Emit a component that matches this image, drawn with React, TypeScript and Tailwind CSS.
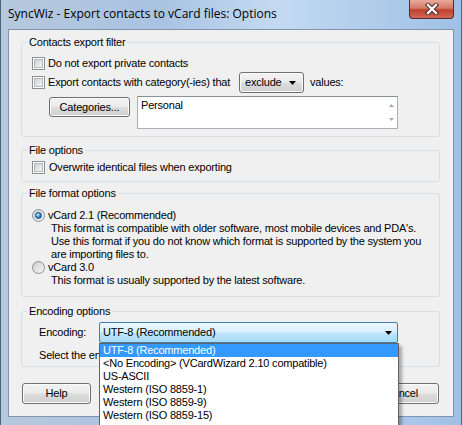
import React from "react";

const ui = "font-['Liberation_Sans',Arial,sans-serif] text-[11px] leading-[13px] tracking-[-0.2px] text-black";
const btnFace =
  "rounded-[3px] border border-[#707070] bg-[linear-gradient(#f2f2f2_0%,#ebebeb_48%,#dddddd_52%,#cfcfcf_100%)] shadow-[inset_0_0_0_1px_#fbfbfb]";

function CheckBox() {
  return (
    <span className="block h-[13px] w-[13px] shrink-0 border border-[#8e8f8f] bg-white p-px">
      <span className="block h-full w-full border border-[#b4b8bd] bg-[linear-gradient(135deg,#cfd2d6,#f4f4f4)]" />
    </span>
  );
}

function Radio({ checked }: { checked?: boolean }) {
  return (
    <span className="flex h-[13px] w-[13px] shrink-0 items-center justify-center rounded-full border border-[#8e8f8f] bg-[linear-gradient(135deg,#c9ccd0,#f7f7f7)]">
      {checked && (
        <span className="block h-[7px] w-[7px] rounded-full border border-[#1b4f7c] bg-[radial-gradient(circle_at_35%_35%,#c6ecff,#3b9ae0_45%,#0d4c86)]" />
      )}
    </span>
  );
}

function Btn({ children, className }: { children: React.ReactNode; className?: string }) {
  return <div className={"flex items-center justify-center " + btnFace + " " + (className ?? "")}>{children}</div>;
}

function Arrow() {
  return (
    <svg width="7" height="4" viewBox="0 0 7 4" className="shrink-0">
      <path d="M0 0h7L3.5 4z" fill="#000" />
    </svg>
  );
}

function Group({
  title,
  className,
  children,
}: {
  title: string;
  className?: string;
  children: React.ReactNode;
}) {
  return (
    <fieldset className={"ml-[12px] w-[419px] rounded-[3px] border border-[#d5dfe5] " + (className ?? "")}>
      <legend className="ml-[5px] px-[2px]">{title}</legend>
      {children}
    </fieldset>
  );
}

export default function App() {
  const encodings = [
    "UTF-8 (Recommended)",
    "<No Encoding> (VCardWizard 2.10 compatible)",
    "US-ASCII",
    "Western (ISO 8859-1)",
    "Western (ISO 8859-9)",
    "Western (ISO 8859-15)",
  ];

  return (
    <div className={"relative h-[425px] w-[462px] overflow-hidden border-r border-l border-[#4a6483] bg-[linear-gradient(90deg,#b6c8dc_0%,#a9c3e2_35%,#c3daf1_60%,#9fc0e6_100%)] " + ui}>
      {/* title bar */}
      <div className="flex h-[29px] items-start">
        <div className="pt-[6px] pl-[7px] font-['Open_Sans','Liberation_Sans',sans-serif] text-[12px] leading-[16px] tracking-normal text-black">
          SyncWiz - Export contacts to vCard files: Options
        </div>
        <div className="ml-auto mr-[7px] flex h-[19px] w-[45px] items-center justify-center rounded-b-[4px] border border-t-0 border-[#5c2a24] bg-[linear-gradient(#e9a99a_0%,#d47a69_45%,#c0402c_55%,#d0685a_100%)]">
          <svg width="14" height="12" viewBox="0 0 14 12">
            <path d="M3 2l8 8M11 2l-8 8" stroke="#4a2520" strokeWidth="4.4" strokeLinecap="square" />
            <path d="M3 2l8 8M11 2l-8 8" stroke="#fff" strokeWidth="2.4" strokeLinecap="square" />
          </svg>
        </div>
      </div>

      {/* client area */}
      <div className="ml-[7px] h-[388px] w-[446px] border border-[#7f94ad] bg-[#f0f0f0]">
        <Group title="Contacts export filter" className="mt-[6px] h-[101px]">
          <div className="mt-[8px] flex items-center gap-[3px] pl-[10px]">
            <CheckBox />
            <span>Do not export private contacts</span>
          </div>
          <div className="mt-[2px] flex h-[21px] items-center pl-[10px]">
            <CheckBox />
            <span className="ml-[3px] w-[191px] whitespace-nowrap">Export contacts with category(-ies) that</span>
            <div className={"flex h-[21px] w-[65px] items-center pr-[7px] pl-[5px] " + btnFace}>
              <span className="flex-1">exclude</span>
              <Arrow />
            </div>
            <span className="ml-[6px]">values:</span>
          </div>
          <div className="mt-[3px] flex items-start pl-[27px]">
            <Btn className="mt-px h-[20px] w-[81px]">Categories...</Btn>
            <div className="ml-[7px] flex h-[33px] w-[261px] border border-[#abadb3] border-t-[#8b8f98] bg-white">
              <span className="flex-1 pt-[2px] pl-[3px]">Personal</span>
              <div className="flex w-[12px] flex-col items-center justify-between py-[7px]">
                <svg width="5" height="3" viewBox="0 0 5 3"><path d="M0 3h5L2.5 0z" fill="#a8a8a8" /></svg>
                <svg width="5" height="3" viewBox="0 0 5 3"><path d="M0 0h5L2.5 3z" fill="#a8a8a8" /></svg>
              </div>
            </div>
          </div>
        </Group>

        <Group title="File options" className="mt-[7px] h-[38px]">
          <div className="mt-[4px] flex items-center gap-[4px] pl-[10px]">
            <CheckBox />
            <span>Overwrite identical files when exporting</span>
          </div>
        </Group>

        <Group title="File format options" className="mt-[5px] h-[110px]">
          <div className="mt-[9px] pl-[10px]">
            <div className="flex items-center gap-[3px]">
              <Radio checked />
              <span>vCard 2.1 (Recommended)</span>
            </div>
            <div className="pl-[19px]">
              <div>This format is compatible with older software, most mobile devices and PDA's.</div>
              <div>Use this format if you do not know which format is supported by the system you</div>
              <div>are importing files to.</div>
            </div>
            <div className="flex items-center gap-[3px]">
              <Radio />
              <span>vCard 3.0</span>
            </div>
            <div className="pl-[19px]">This format is usually supported by the latest software.</div>
          </div>
        </Group>

        <Group title="Encoding options" className="mt-[8px] h-[62px]">
          <div className="mt-[4px] flex h-[21px] items-center pl-[17px]">
            <span className="w-[60px]">Encoding:</span>
            <div className="flex h-[21px] w-[299px] items-center justify-between rounded-[2px] border border-[#3c7fb1] bg-[linear-gradient(#eaf6fd_0%,#d9f0fc_48%,#bee6fd_52%,#a7d9f5_100%)] pr-[5px] pl-[3px]">
              <span>UTF-8 (Recommended)</span>
              <Arrow />
            </div>
          </div>
          <div className="mt-[6px] pl-[17px]">Select the en</div>
        </Group>

        <div className="mt-[16px] flex items-center pr-[14px] pl-[13px]">
          <Btn className="h-[21px] w-[69px]">Help</Btn>
          <Btn className="ml-auto h-[21px] w-[75px]">OK</Btn>
          <Btn className="ml-[4px] h-[21px] w-[75px]">Cancel</Btn>
        </div>
      </div>

      {/* open dropdown list */}
      <div className="absolute top-[343px] left-[98px] w-[300px] border border-[#646464] bg-white shadow-[3px_3px_3px_rgba(0,0,0,0.3)]">
        {encodings.map((e, i) => (
          <div
            key={e}
            className={"h-[13px] pl-[3px] whitespace-nowrap " + (i === 0 ? "bg-[#3399ff] text-white" : "")}
          >
            {e}
          </div>
        ))}
        <div className="h-[13px]" />
      </div>
    </div>
  );
}
